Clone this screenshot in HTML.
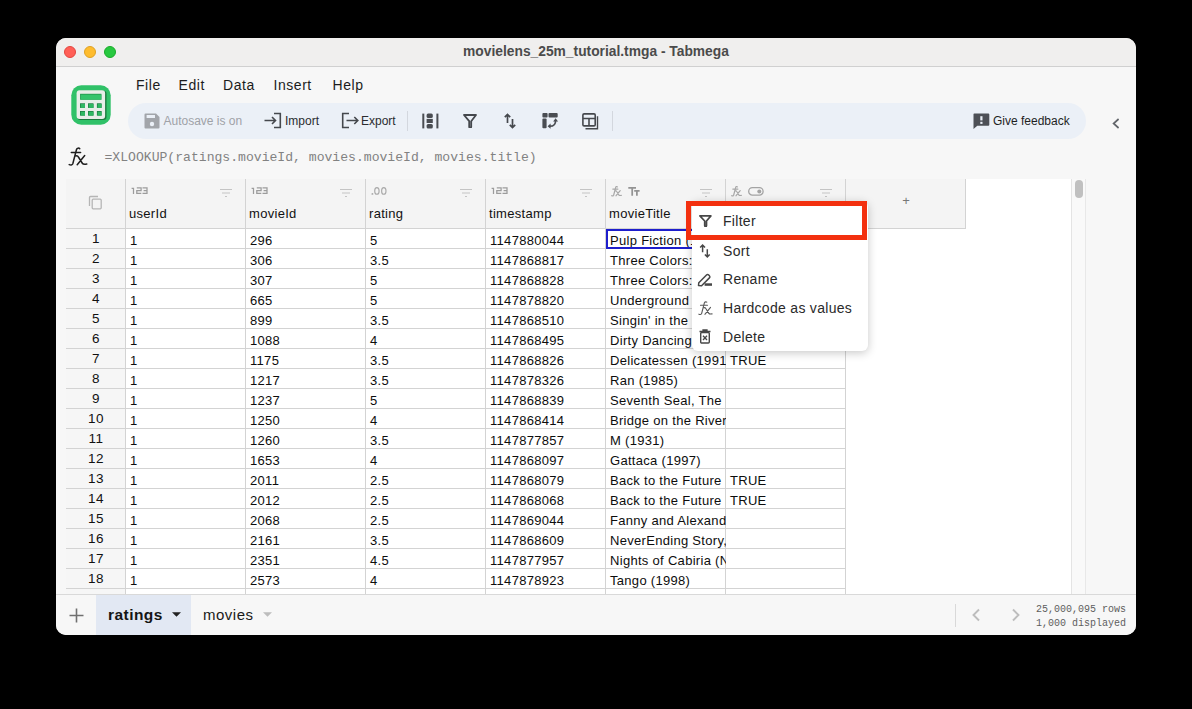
<!DOCTYPE html>
<html><head><meta charset="utf-8">
<style>
*{box-sizing:border-box;margin:0;padding:0}
html,body{width:1192px;height:709px;background:#000;overflow:hidden;font-family:"Liberation Sans",sans-serif;}
.a{position:absolute}
#win{position:absolute;left:56px;top:38px;width:1080px;height:597px;border-radius:10px;background:#f7f7f7;overflow:hidden}
#title{position:absolute;left:0;top:0;width:1080px;height:29px;background:#f0efee;border-bottom:1px solid #d0d0d0}
.tl{position:absolute;top:8px;width:12px;height:12px;border-radius:50%}
#ttxt{position:absolute;left:0;width:1080px;top:6px;text-align:center;font-weight:bold;font-size:13.8px;color:#4b4b4b;line-height:16px}
.menu{position:absolute;top:39px;font-size:14px;color:#1c1c1c;line-height:17px;letter-spacing:0.55px}
#tb{position:absolute;left:72px;top:65px;width:958px;height:36px;border-radius:18px;background:#ebf0f7}
.tbt{position:absolute;top:76px;font-size:12px;color:#2a2c30;line-height:14px}
#fxt{position:absolute;left:48.5px;top:112px;font-size:13.1px;font-family:"Liberation Mono",monospace;color:#828282;line-height:16px}
#grid{position:absolute;left:10px;top:141px;width:1005px;height:415px;background:#fff;overflow:hidden}
.hd{background:#f4f4f4}
.ty{left:5px;top:7px;font-size:9px;color:#a6a6a6;letter-spacing:0.6px;font-family:"Liberation Mono",monospace;transform:scaleY(0.85)}
.fxi{top:6px;font-size:12px;color:#ababab;font-family:"Liberation Serif",serif;font-style:italic;line-height:12px}
.tt{top:7px;font-size:12px;color:#9a9a9a;font-weight:bold;line-height:12px}
.hn{left:3px;top:27px;font-size:13px;color:#111;line-height:16px;letter-spacing:0.3px}
.plus{left:0;width:120px;top:15px;text-align:center;font-size:13px;color:#777;line-height:14px}
.rn{left:0;width:60px;height:20px;background:#f6f6f6;border-right:1px solid #d3d3d3;border-bottom:1px solid #d3d3d3;text-align:center;font-size:13.5px;color:#111;line-height:19px;letter-spacing:0.6px;padding-left:1px}
.c{width:120px;height:20px;border-right:1px solid #d3d3d3;border-bottom:1px solid #d3d3d3;font-size:13px;color:#0d0d0d;padding-left:4px;line-height:23px;letter-spacing:0.3px;white-space:nowrap;clip-path:inset(0 0 -6px 0)}
#tabs{position:absolute;left:0;top:556px;width:1080px;height:41px;background:#f7f7f7;border-top:1px solid #d9d9d9}
#menuc{position:absolute;left:636px;top:163px;width:176px;height:150px;background:#fff;border-radius:6px;box-shadow:0 2px 10px rgba(0,0,0,0.22)}
.mi{position:absolute;left:31px;font-size:14px;color:#2a2a2a;line-height:16px;letter-spacing:0.3px}
</style></head><body>
<div id="win">
  <div id="title">
    <div class="tl" style="left:8px;background:#ff5f57;border:0.5px solid #e2463f"></div>
    <div class="tl" style="left:28px;background:#febc2e;border:0.5px solid #dea123"></div>
    <div class="tl" style="left:48px;background:#28c840;border:0.5px solid #1aab29"></div>
    <div id="ttxt">movielens_25m_tutorial.tmga - Tabmega</div>
  </div>
  <!-- app icon -->
  <svg class="a" style="left:15px;top:47px" width="40" height="40" viewBox="0 0 40 40">
    <rect x="0.3" y="0.3" width="39.4" height="39.4" rx="10" fill="#30c168"/>
    <rect x="6.3" y="5.8" width="29.2" height="29.2" rx="3" fill="#1b7a3d"/>
    <rect x="5.6" y="5.2" width="28.5" height="28.9" rx="3" fill="#e8eee8"/>
    <rect x="9.1" y="8.8" width="21.3" height="5.9" fill="#1f8c47"/>
    <rect x="9.6" y="9.5" width="20.8" height="5.2" fill="#34c46b"/>
    <g fill="#1c7d40">
      <rect x="9" y="18.3" width="5" height="4.6"/><rect x="17" y="18.3" width="5.5" height="4.6"/><rect x="25.9" y="18.3" width="4.7" height="4.6"/>
      <rect x="9" y="26" width="5" height="4.6"/><rect x="17" y="26" width="5.5" height="4.6"/><rect x="25.9" y="26" width="4.7" height="4.6"/>
    </g>
    <g fill="#2fb862">
      <rect x="9.7" y="19" width="4.3" height="3.9"/><rect x="17.7" y="19" width="4.8" height="3.9"/><rect x="26.6" y="19" width="4" height="3.9"/>
      <rect x="9.7" y="26.7" width="4.3" height="3.9"/><rect x="17.7" y="26.7" width="4.8" height="3.9"/><rect x="26.6" y="26.7" width="4" height="3.9"/>
    </g>
  </svg>
  <div class="menu" style="left:80px">File</div>
  <div class="menu" style="left:122.5px">Edit</div>
  <div class="menu" style="left:167px">Data</div>
  <div class="menu" style="left:217.5px">Insert</div>
  <div class="menu" style="left:276.5px">Help</div>

  <div id="tb"></div>
  <!-- save icon -->
  <svg class="a" style="left:88px;top:75px" width="16" height="16" viewBox="0 0 16 16">
    <path d="M1.5 0.5h10.5l3.5 3.5v10.5a1 1 0 0 1-1 1h-13a1 1 0 0 1-1-1v-13a1 1 0 0 1 1-1z" fill="#a2a5aa"/>
    <rect x="2.6" y="2" width="8.4" height="3" fill="#ebf0f7"/>
    <circle cx="8" cy="11" r="2.2" fill="#ebf0f7"/>
  </svg>
  <div class="tbt" style="left:107.5px;color:#9fa2a7">Autosave is on</div>
  <!-- import -->
  <svg class="a" style="left:208px;top:74px" width="18" height="17" viewBox="0 0 18 17">
    <path d="M10 1.5h6.3v14H10" fill="none" stroke="#45484d" stroke-width="1.6"/>
    <path d="M0.5 8.5h11M8 5l3.5 3.5L8 12" fill="none" stroke="#45484d" stroke-width="1.6"/>
  </svg>
  <div class="tbt" style="left:229px">Import</div>
  <!-- export -->
  <svg class="a" style="left:284.5px;top:74px" width="18" height="17" viewBox="0 0 18 17">
    <path d="M8 1.5H1.7v14H8" fill="none" stroke="#45484d" stroke-width="1.6"/>
    <path d="M5.5 8.5h11.3M13.3 5l3.5 3.5-3.5 3.5" fill="none" stroke="#45484d" stroke-width="1.6"/>
  </svg>
  <div class="tbt" style="left:305px">Export</div>
  <div class="a" style="left:351px;top:73px;width:1px;height:20px;background:#d3d7de"></div>
  <!-- columns icon -->
  <svg class="a" style="left:366px;top:75px" width="17" height="16" viewBox="0 0 17 16">
    <rect x="0.3" y="0.6" width="2" height="14.8" fill="#4a4d52"/>
    <rect x="14.4" y="0.6" width="2" height="14.8" fill="#4a4d52"/>
    <rect x="4.6" y="0.6" width="6.2" height="4.3" rx="1.5" fill="#4a4d52"/>
    <rect x="4.6" y="5.9" width="6.2" height="4.1" fill="#4a4d52"/>
    <rect x="4.6" y="11" width="6.2" height="4.4" rx="1.5" fill="#4a4d52"/>
  </svg>
  <!-- filter icon -->
  <svg class="a" style="left:407px;top:76px" width="14" height="14" viewBox="0 0 14 14">
    <path d="M1 1h12L8.2 7.2v5.5a1 1 0 0 1-2 0V7.2z" fill="none" stroke="#45484d" stroke-width="1.8" stroke-linejoin="round"/>
  </svg>
  <!-- sort icon -->
  <svg class="a" style="left:447px;top:75px" width="14" height="16" viewBox="0 0 14 16">
    <path d="M4.5 10V1.5M1.8 4.2l2.7-2.7 2.7 2.7M9.5 6v8.5M6.8 11.8l2.7 2.7 2.7-2.7" fill="none" stroke="#45484d" stroke-width="1.7"/>
  </svg>
  <!-- pivot icon -->
  <svg class="a" style="left:486px;top:75px" width="17" height="16" viewBox="0 0 17 16">
    <rect x="0.4" y="0" width="5.2" height="4.6" rx="1" fill="#4a4d52"/>
    <rect x="6.5" y="0" width="9.2" height="4.6" rx="1" fill="#4a4d52"/>
    <rect x="0.4" y="5.4" width="4.2" height="9.8" rx="1" fill="#4a4d52"/>
    <path d="M8 13.2C11.8 13.2 13.6 10.8 13.6 7.4" fill="none" stroke="#4a4d52" stroke-width="1.7"/>
    <path d="M11.1 8.4L13.6 5.2L16.1 8.4z M8.6 10.6L5.6 13.2L8.6 15.8z" fill="#4a4d52"/>
  </svg>
  <!-- layout icon -->
  <svg class="a" style="left:526px;top:75px" width="17" height="17" viewBox="0 0 17 17">
    <rect x="0.9" y="0.9" width="12.3" height="12" rx="1.2" fill="none" stroke="#45484d" stroke-width="1.6"/>
    <path d="M1 5.5h12M7 5.5v7.5" stroke="#45484d" stroke-width="1.6"/>
    <path d="M15.5 3.3v12.4H3.5" fill="none" stroke="#45484d" stroke-width="1.4"/>
  </svg>
  <div class="a" style="left:556px;top:73px;width:1px;height:20px;background:#d3d7de"></div>
  <!-- feedback -->
  <svg class="a" style="left:916.5px;top:75px" width="17" height="17" viewBox="0 0 17 17">
    <path d="M1.3 0.5h14a1 1 0 0 1 1 1v10.3a1 1 0 0 1-1 1H4.3L0.5 16V1.3a0.8 0.8 0 0 1 0.8-0.8z" fill="#4d5056"/>
    <rect x="7.3" y="3.2" width="2.2" height="4.2" fill="#ebf0f7"/>
    <rect x="7.3" y="8.8" width="2.2" height="2.1" fill="#ebf0f7"/>
  </svg>
  <div class="tbt" style="left:937px;color:#1f1f1f">Give feedback</div>
  <svg class="a" style="left:1055px;top:80px" width="10" height="12" viewBox="0 0 10 12">
    <path d="M7.6 1L2.6 5.5 7.6 10" fill="none" stroke="#62656a" stroke-width="1.7"/>
  </svg>

  <!-- formula -->
  <svg class="a" style="left:12px;top:109px" width="20" height="20" viewBox="0 0 20 20"><g fill="none" stroke="#1f1f1f" stroke-width="1.5" stroke-linecap="round"><path d="M11.7 1.6C11 0.9 9 0.8 8.5 2.5L4.8 16.8C4.3 18.2 2.5 18.2 1.2 17.6M3.3 5.6H12.6M8 9C9 8.6 9.8 9 10.4 10L14.5 16.5C15 17.3 16.5 17.5 18.8 17.1M16.7 8.5L9.2 17.7"/></g></svg>
  <div id="fxt">=XLOOKUP(ratings.movieId, movies.movieId, movies.title)</div>

  <div id="grid"><div class="a hd" style="left:0;top:0;width:60px;height:50px;border-right:1px solid #d3d3d3;border-bottom:1px solid #d3d3d3"><svg class="a" style="left:22px;top:16px" width="15" height="15" viewBox="0 0 15 15"><path d="M1.5 11V2.5a1 1 0 0 1 1-1H10" fill="none" stroke="#b5b5b5" stroke-width="1.3"/><rect x="4.2" y="4.2" width="9" height="9.6" rx="1" fill="none" stroke="#b5b5b5" stroke-width="1.3"/></svg></div><div class="a hd" style="left:60px;top:0;width:120px;height:50px;border-right:1px solid #d3d3d3;border-bottom:1px solid #d3d3d3"><svg class="a" style="left:5px;top:8px" width="18" height="8" viewBox="0 0 18 8"><path d="M0.6 1.3h1.9v5.8M5.8 0.8h4.3v2.7h-4.3v2.9h4.5M11.5 0.8h4.5v5.6h-4.5M12.6 3.5h3.4" fill="none" stroke="#9c9c9c" stroke-width="1.25"/></svg><svg class="a" style="left:94px;top:9px" width="13" height="10" viewBox="0 0 13 10"><path d="M0 1.5h12M2 5h8M5 8.5h2" stroke="#c4c4c4" stroke-width="1.2"/></svg><div class="a hn">userId</div></div><div class="a hd" style="left:180px;top:0;width:120px;height:50px;border-right:1px solid #d3d3d3;border-bottom:1px solid #d3d3d3"><svg class="a" style="left:5px;top:8px" width="18" height="8" viewBox="0 0 18 8"><path d="M0.6 1.3h1.9v5.8M5.8 0.8h4.3v2.7h-4.3v2.9h4.5M11.5 0.8h4.5v5.6h-4.5M12.6 3.5h3.4" fill="none" stroke="#9c9c9c" stroke-width="1.25"/></svg><svg class="a" style="left:94px;top:9px" width="13" height="10" viewBox="0 0 13 10"><path d="M0 1.5h12M2 5h8M5 8.5h2" stroke="#c4c4c4" stroke-width="1.2"/></svg><div class="a hn">movieId</div></div><div class="a hd" style="left:300px;top:0;width:120px;height:50px;border-right:1px solid #d3d3d3;border-bottom:1px solid #d3d3d3"><svg class="a" style="left:5px;top:7px" width="17" height="10" viewBox="0 0 17 10"><circle cx="1.4" cy="7.9" r="0.95" fill="#aaa"/><g fill="none" stroke="#aaa" stroke-width="1.15"><ellipse cx="5.9" cy="4.9" rx="2.2" ry="3.3"/><ellipse cx="12.8" cy="4.9" rx="2.2" ry="3.3"/></g></svg><svg class="a" style="left:94px;top:9px" width="13" height="10" viewBox="0 0 13 10"><path d="M0 1.5h12M2 5h8M5 8.5h2" stroke="#c4c4c4" stroke-width="1.2"/></svg><div class="a hn">rating</div></div><div class="a hd" style="left:420px;top:0;width:120px;height:50px;border-right:1px solid #d3d3d3;border-bottom:1px solid #d3d3d3"><svg class="a" style="left:5px;top:8px" width="18" height="8" viewBox="0 0 18 8"><path d="M0.6 1.3h1.9v5.8M5.8 0.8h4.3v2.7h-4.3v2.9h4.5M11.5 0.8h4.5v5.6h-4.5M12.6 3.5h3.4" fill="none" stroke="#9c9c9c" stroke-width="1.25"/></svg><svg class="a" style="left:94px;top:9px" width="13" height="10" viewBox="0 0 13 10"><path d="M0 1.5h12M2 5h8M5 8.5h2" stroke="#c4c4c4" stroke-width="1.2"/></svg><div class="a hn">timestamp</div></div><div class="a hd" style="left:540px;top:0;width:120px;height:50px;border-right:1px solid #d3d3d3;border-bottom:1px solid #d3d3d3"><svg class="a" style="left:4.5px;top:6.5px" width="11" height="11" viewBox="0 0 20 20"><path d="M11.7 1.6C11 0.9 9 0.8 8.5 2.5L4.8 16.8C4.3 18.2 2.5 18.2 1.2 17.6M3.3 5.6H12.6M8 9C9 8.6 9.8 9 10.4 10L14.5 16.5C15 17.3 16.5 17.5 18.8 17.1M16.7 8.5L9.2 17.7" fill="none" stroke="#a8a8a8" stroke-width="2.2" stroke-linecap="round"/></svg><svg class="a" style="left:22px;top:8px" width="12" height="9" viewBox="0 0 12 9"><path d="M0.3 0.9H8M4.2 0.9V8.8M6.2 3.9H11.6M8.9 3.9V8.8" fill="none" stroke="#939393" stroke-width="1.75"/></svg><svg class="a" style="left:94px;top:9px" width="13" height="10" viewBox="0 0 13 10"><path d="M0 1.5h12M2 5h8M5 8.5h2" stroke="#c4c4c4" stroke-width="1.2"/></svg><div class="a hn">movieTitle</div></div><div class="a hd" style="left:660px;top:0;width:120px;height:50px;border-right:1px solid #d3d3d3;border-bottom:1px solid #d3d3d3"><svg class="a" style="left:4.5px;top:6.5px" width="11" height="11" viewBox="0 0 20 20"><path d="M11.7 1.6C11 0.9 9 0.8 8.5 2.5L4.8 16.8C4.3 18.2 2.5 18.2 1.2 17.6M3.3 5.6H12.6M8 9C9 8.6 9.8 9 10.4 10L14.5 16.5C15 17.3 16.5 17.5 18.8 17.1M16.7 8.5L9.2 17.7" fill="none" stroke="#a8a8a8" stroke-width="2.2" stroke-linecap="round"/></svg><svg class="a" style="left:21.5px;top:8px" width="16" height="9" viewBox="0 0 16 9"><rect x="0.7" y="0.7" width="14.4" height="7.4" rx="3.7" fill="none" stroke="#a3a3a3" stroke-width="1.3"/><circle cx="11.3" cy="4.4" r="2" fill="#a3a3a3"/></svg><svg class="a" style="left:94px;top:9px" width="13" height="10" viewBox="0 0 13 10"><path d="M0 1.5h12M2 5h8M5 8.5h2" stroke="#c4c4c4" stroke-width="1.2"/></svg><div class="a hn"></div></div><div class="a hd" style="left:780px;top:0;width:120px;height:50px;border-right:1px solid #d3d3d3;border-bottom:1px solid #d3d3d3"><div class="a plus">+</div></div><div class="a rn" style="top:50px">1</div><div class="a c" style="left:60px;top:50px">1</div><div class="a c" style="left:180px;top:50px">296</div><div class="a c" style="left:300px;top:50px">5</div><div class="a c" style="left:420px;top:50px">1147880044</div><div class="a c" style="left:540px;top:50px">Pulp Fiction (1994)</div><div class="a c" style="left:660px;top:50px"></div><div class="a rn" style="top:70px">2</div><div class="a c" style="left:60px;top:70px">1</div><div class="a c" style="left:180px;top:70px">306</div><div class="a c" style="left:300px;top:70px">3.5</div><div class="a c" style="left:420px;top:70px">1147868817</div><div class="a c" style="left:540px;top:70px">Three Colors: Red (1994)</div><div class="a c" style="left:660px;top:70px"></div><div class="a rn" style="top:90px">3</div><div class="a c" style="left:60px;top:90px">1</div><div class="a c" style="left:180px;top:90px">307</div><div class="a c" style="left:300px;top:90px">5</div><div class="a c" style="left:420px;top:90px">1147868828</div><div class="a c" style="left:540px;top:90px">Three Colors: Blue (1993)</div><div class="a c" style="left:660px;top:90px"></div><div class="a rn" style="top:110px">4</div><div class="a c" style="left:60px;top:110px">1</div><div class="a c" style="left:180px;top:110px">665</div><div class="a c" style="left:300px;top:110px">5</div><div class="a c" style="left:420px;top:110px">1147878820</div><div class="a c" style="left:540px;top:110px">Underground (1995)</div><div class="a c" style="left:660px;top:110px"></div><div class="a rn" style="top:130px">5</div><div class="a c" style="left:60px;top:130px">1</div><div class="a c" style="left:180px;top:130px">899</div><div class="a c" style="left:300px;top:130px">3.5</div><div class="a c" style="left:420px;top:130px">1147868510</div><div class="a c" style="left:540px;top:130px">Singin' in the Rain (1952)</div><div class="a c" style="left:660px;top:130px"></div><div class="a rn" style="top:150px">6</div><div class="a c" style="left:60px;top:150px">1</div><div class="a c" style="left:180px;top:150px">1088</div><div class="a c" style="left:300px;top:150px">4</div><div class="a c" style="left:420px;top:150px">1147868495</div><div class="a c" style="left:540px;top:150px">Dirty Dancing (1987)</div><div class="a c" style="left:660px;top:150px"></div><div class="a rn" style="top:170px">7</div><div class="a c" style="left:60px;top:170px">1</div><div class="a c" style="left:180px;top:170px">1175</div><div class="a c" style="left:300px;top:170px">3.5</div><div class="a c" style="left:420px;top:170px">1147868826</div><div class="a c" style="left:540px;top:170px">Delicatessen (1991)</div><div class="a c" style="left:660px;top:170px">TRUE</div><div class="a rn" style="top:190px">8</div><div class="a c" style="left:60px;top:190px">1</div><div class="a c" style="left:180px;top:190px">1217</div><div class="a c" style="left:300px;top:190px">3.5</div><div class="a c" style="left:420px;top:190px">1147878326</div><div class="a c" style="left:540px;top:190px">Ran (1985)</div><div class="a c" style="left:660px;top:190px"></div><div class="a rn" style="top:210px">9</div><div class="a c" style="left:60px;top:210px">1</div><div class="a c" style="left:180px;top:210px">1237</div><div class="a c" style="left:300px;top:210px">5</div><div class="a c" style="left:420px;top:210px">1147868839</div><div class="a c" style="left:540px;top:210px">Seventh Seal, The (1957)</div><div class="a c" style="left:660px;top:210px"></div><div class="a rn" style="top:230px">10</div><div class="a c" style="left:60px;top:230px">1</div><div class="a c" style="left:180px;top:230px">1250</div><div class="a c" style="left:300px;top:230px">4</div><div class="a c" style="left:420px;top:230px">1147868414</div><div class="a c" style="left:540px;top:230px">Bridge on the River Kwai (1957)</div><div class="a c" style="left:660px;top:230px"></div><div class="a rn" style="top:250px">11</div><div class="a c" style="left:60px;top:250px">1</div><div class="a c" style="left:180px;top:250px">1260</div><div class="a c" style="left:300px;top:250px">3.5</div><div class="a c" style="left:420px;top:250px">1147877857</div><div class="a c" style="left:540px;top:250px">M (1931)</div><div class="a c" style="left:660px;top:250px"></div><div class="a rn" style="top:270px">12</div><div class="a c" style="left:60px;top:270px">1</div><div class="a c" style="left:180px;top:270px">1653</div><div class="a c" style="left:300px;top:270px">4</div><div class="a c" style="left:420px;top:270px">1147868097</div><div class="a c" style="left:540px;top:270px">Gattaca (1997)</div><div class="a c" style="left:660px;top:270px"></div><div class="a rn" style="top:290px">13</div><div class="a c" style="left:60px;top:290px">1</div><div class="a c" style="left:180px;top:290px">2011</div><div class="a c" style="left:300px;top:290px">2.5</div><div class="a c" style="left:420px;top:290px">1147868079</div><div class="a c" style="left:540px;top:290px">Back to the Future Part II (1989)</div><div class="a c" style="left:660px;top:290px">TRUE</div><div class="a rn" style="top:310px">14</div><div class="a c" style="left:60px;top:310px">1</div><div class="a c" style="left:180px;top:310px">2012</div><div class="a c" style="left:300px;top:310px">2.5</div><div class="a c" style="left:420px;top:310px">1147868068</div><div class="a c" style="left:540px;top:310px">Back to the Future Part III (1990)</div><div class="a c" style="left:660px;top:310px">TRUE</div><div class="a rn" style="top:330px">15</div><div class="a c" style="left:60px;top:330px">1</div><div class="a c" style="left:180px;top:330px">2068</div><div class="a c" style="left:300px;top:330px">2.5</div><div class="a c" style="left:420px;top:330px">1147869044</div><div class="a c" style="left:540px;top:330px">Fanny and Alexander (1982)</div><div class="a c" style="left:660px;top:330px"></div><div class="a rn" style="top:350px">16</div><div class="a c" style="left:60px;top:350px">1</div><div class="a c" style="left:180px;top:350px">2161</div><div class="a c" style="left:300px;top:350px">3.5</div><div class="a c" style="left:420px;top:350px">1147868609</div><div class="a c" style="left:540px;top:350px">NeverEnding Story, The (1984)</div><div class="a c" style="left:660px;top:350px"></div><div class="a rn" style="top:370px">17</div><div class="a c" style="left:60px;top:370px">1</div><div class="a c" style="left:180px;top:370px">2351</div><div class="a c" style="left:300px;top:370px">4.5</div><div class="a c" style="left:420px;top:370px">1147877957</div><div class="a c" style="left:540px;top:370px">Nights of Cabiria (Notti di Cabiria, Le) (1957)</div><div class="a c" style="left:660px;top:370px"></div><div class="a rn" style="top:390px">18</div><div class="a c" style="left:60px;top:390px">1</div><div class="a c" style="left:180px;top:390px">2573</div><div class="a c" style="left:300px;top:390px">4</div><div class="a c" style="left:420px;top:390px">1147878923</div><div class="a c" style="left:540px;top:390px">Tango (1998)</div><div class="a c" style="left:660px;top:390px"></div><div class="a rn" style="top:410px">19</div><div class="a c" style="left:60px;top:410px">1</div><div class="a c" style="left:180px;top:410px">2632</div><div class="a c" style="left:300px;top:410px">5</div><div class="a c" style="left:420px;top:410px">1147878248</div><div class="a c" style="left:540px;top:410px">Saragossa Manuscript (1965)</div><div class="a c" style="left:660px;top:410px"></div>
    <div class="a" style="left:540px;top:50px;width:121px;height:20px;border:2px solid #1e1ecc"></div>
  </div>
  <!-- scrollbar -->
  <div class="a" style="left:1015px;top:141px;width:15px;height:415px;background:#f9f9f9;border-left:1px solid #e4e4e4;border-right:1px solid #e8e8e8"></div>
  <div class="a" style="left:1019px;top:142px;width:8px;height:18px;border-radius:4px;background:#c0c0c0"></div>

  <div id="tabs">
    <div class="a" style="left:40px;top:0;width:95px;height:41px;background:#e2e8f3"></div>
    <svg class="a" style="left:13px;top:13px" width="15" height="15" viewBox="0 0 15 15"><path d="M7.5 0.5v14M0.5 7.5h14" stroke="#707070" stroke-width="1.6"/></svg>
    <div class="a" style="left:52px;top:11px;font-size:15.5px;font-weight:bold;color:#151515;line-height:17px;letter-spacing:0.45px">ratings</div>
    <svg class="a" style="left:115.5px;top:16.5px" width="10" height="6" viewBox="0 0 10 6"><path d="M0 0.2h9L4.5 4.7z" fill="#222"/></svg>
    <div class="a" style="left:147px;top:11px;font-size:15px;color:#1a1a1a;line-height:17px;letter-spacing:0.5px">movies</div>
    <svg class="a" style="left:206.5px;top:16.5px" width="10" height="6" viewBox="0 0 10 6"><path d="M0 0.2h9L4.5 4.7z" fill="#bdbdbd"/></svg>
    <div class="a" style="left:899px;top:9px;width:1px;height:23px;background:#d9d9d9"></div>
    <svg class="a" style="left:915px;top:13px" width="10" height="14" viewBox="0 0 10 14"><path d="M8 1.5L2.5 7 8 12.5" fill="none" stroke="#bdbdbd" stroke-width="1.9"/></svg>
    <svg class="a" style="left:955px;top:13px" width="10" height="14" viewBox="0 0 10 14"><path d="M2 1.5L7.5 7 2 12.5" fill="none" stroke="#bdbdbd" stroke-width="1.9"/></svg>
    <div class="a" style="left:980px;top:7.5px;font-family:'Liberation Mono',monospace;font-size:10px;line-height:14px;color:#5e5e5e">25,000,095 rows<br>1,000 displayed</div>
  </div>

  <!-- context menu -->
  <div id="menuc">
    <svg class="a" style="left:6.5px;top:14px" width="13" height="12" viewBox="0 0 13 12"><path d="M0.9 0.9h11L7.5 6v4.6a0.9 0.9 0 0 1-1.8 0V6z" fill="none" stroke="#474747" stroke-width="1.7" stroke-linejoin="round"/></svg>
    <div class="mi" style="top:12px">Filter</div>
    <svg class="a" style="left:7px;top:43px" width="12" height="14" viewBox="0 0 12 14"><path d="M3.6 8.3V1.2M1.2 3.6l2.4-2.5 2.4 2.5M8.3 5.3v7.5M5.9 10.4l2.4 2.5 2.4-2.5" fill="none" stroke="#474747" stroke-width="1.5"/></svg>
    <div class="mi" style="top:41.5px">Sort</div>
    <svg class="a" style="left:5px;top:72px" width="16" height="14" viewBox="0 0 16 14"><path d="M1.5 12.6l0.3-2.9 7.7-7.7c0.7-0.7 1.5-0.7 2.2 0l0.7 0.7c0.7 0.7 0.7 1.5 0 2.2l-7.8 7.8z" fill="none" stroke="#474747" stroke-width="1.5" stroke-linejoin="round"/><rect x="7.6" y="10.3" width="7.4" height="2.5" fill="#474747"/></svg>
    <div class="mi" style="top:70px">Rename</div>
    <svg class="a" style="left:6px;top:100px" width="15" height="15" viewBox="0 0 20 20"><g fill="none" stroke="#5a5a5a" stroke-width="1.5" stroke-linecap="round"><path d="M11.7 1.6C11 0.9 9 0.8 8.5 2.5L4.8 16.8C4.3 18.2 2.5 18.2 1.2 17.6M3.3 5.6H12.6M8 9C9 8.6 9.8 9 10.4 10L14.5 16.5C15 17.3 16.5 17.5 18.8 17.1M16.7 8.5L9.2 17.7"/></g></svg>
    <div class="mi" style="top:99px">Hardcode as values</div>
    <svg class="a" style="left:7px;top:128px" width="12" height="15" viewBox="0 0 12 15"><path d="M0.5 2.5h11M4 2.5V1h4v1.5" fill="none" stroke="#474747" stroke-width="1.3"/><rect x="1.7" y="3.5" width="8.6" height="10.5" rx="1" fill="none" stroke="#474747" stroke-width="1.4"/><path d="M4 6.8l4 4.2M8 6.8l-4 4.2" stroke="#474747" stroke-width="1.3"/></svg>
    <div class="mi" style="top:128px">Delete</div>
  </div>
  <div class="a" style="left:630px;top:163px;width:181px;height:39px;border:5px solid #f3300f"></div>
</div>
</body></html>
